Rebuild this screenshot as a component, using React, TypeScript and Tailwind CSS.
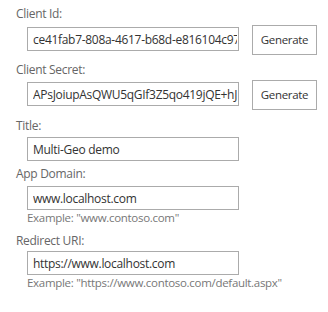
import React from 'react';

const font = { fontFamily: '"Open Sans", "Noto Sans", sans-serif' };

const Label: React.FC<{ text: string; className?: string }> = ({ text, className }) => (
  <div className={`h-[18px] text-[12px] leading-[18px] text-[#666666] tracking-[-0.3px] ${className ?? ''}`}>{text}</div>
);

const Field: React.FC<{ value: string; className?: string }> = ({ value, className }) => (
  <input
    readOnly
    value={value}
    className={`ml-[11px] w-[212px] h-[24px] border border-[#ababab] bg-white pl-[5px] pr-[1px] text-[12px] text-[#333333] tracking-[-0.3px] outline-none ${className ?? ''}`}
    style={font}
  />
);

const GenerateButton = () => (
  <button className="ml-[13px] w-[65px] h-[30px] border border-[#ababab] bg-white text-[11.5px] text-[#333333] tracking-[-0.3px]" style={font}>
    Generate
  </button>
);

const Hint: React.FC<{ text: string }> = ({ text }) => (
  <div className="ml-[11px] h-[16px] text-[11.5px] leading-[16px] text-[#777777] tracking-[-0.3px]">{text}</div>
);

export default function App() {
  return (
    <div className="w-[328px] h-[312px] bg-white pl-[16px] pt-[5px]" style={font}>
      <Label text="Client Id:" />
      <div className="flex items-start mt-[2px]">
        <Field value="ce41fab7-808a-4617-b68d-e816104c97a1" className="mt-[2px]" />
        <GenerateButton />
      </div>

      <Label text="Client Secret:" className="mt-[6px]" />
      <div className="flex items-start mt-[1px]">
        <Field value="APsJoiupAsQWU5qGIf3Z5qo419jQE+hJ2kLw=" className="mt-[2px]" />
        <GenerateButton />
      </div>

      <Label text="Title:" className="mt-[7px]" />
      <div className="flex mt-[2px]">
        <Field value="Multi-Geo demo" className="h-[22px]" />
      </div>

      <Label text="App Domain:" className="mt-[4px]" />
      <div className="flex mt-[3px]">
        <Field value="www.localhost.com" className="h-[22px]" />
      </div>
      <Hint text={'Example: "www.contoso.com"'} />

      <Label text="Redirect URI:" className="mt-[6px]" />
      <div className="flex mt-[1px]">
        <Field value="https://www.localhost.com" className="h-[22px]" />
      </div>
      <Hint text={'Example: "https://www.contoso.com/default.aspx"'} />
    </div>
  );
}
